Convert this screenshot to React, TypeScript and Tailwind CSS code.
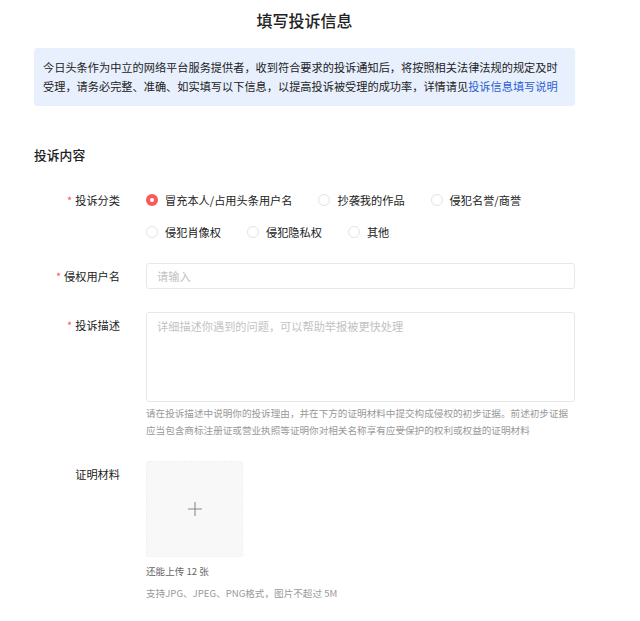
import React from "react";

const font = { fontFamily: '"Noto Sans CJK SC", "Noto Sans", sans-serif' };

function Radio({ label, checked }: { label: string; checked?: boolean }) {
  return (
    <label className="flex items-center mr-[26px] h-[20px]">
      {checked ? (
        <span className="w-[12px] h-[12px] rounded-full bg-[#f85959] flex items-center justify-center">
          <span className="w-[4px] h-[4px] rounded-full bg-white" />
        </span>
      ) : (
        <span className="w-[12px] h-[12px] rounded-full border border-[#e3e3e3] bg-white" />
      )}
      <span className="ml-[7px] text-[11.2px] text-[#222]">{label}</span>
    </label>
  );
}

function Label({ text, required, lh }: { text: string; required?: boolean; lh: string }) {
  return (
    <div className={`w-[86px] shrink-0 flex justify-end items-start text-[11.2px] text-[#222] ${lh}`}>
      {required && <span className="text-[#f85959] mr-[3px] text-[11px]">*</span>}
      <span>{text}</span>
    </div>
  );
}

export default function App() {
  return (
    <div className="w-[640px] min-h-[621px] bg-white" style={font}>
      <div className="ml-[34px] w-[541px] pt-[8px]">
        <h1 className="text-center text-[16px] leading-[24px] font-medium text-[#222]">填写投诉信息</h1>
        <div className="mt-[16px] bg-[#e8f0fe] rounded-[3px] px-[9px] py-[10px] text-[11.2px] leading-[19px] text-[#222]">
          今日头条作为中立的网络平台服务提供者，收到符合要求的投诉通知后，将按照相关法律法规的规定及时
          <br />
          受理，请务必完整、准确、如实填写以下信息，以提高投诉被受理的成功率，详情请见
          <span className="text-[#2f5fd3]">投诉信息填写说明</span>
        </div>
        <h2 className="mt-[39px] text-[12.8px] leading-[20px] font-medium text-[#222]">投诉内容</h2>

        <div className="mt-[25px] flex">
          <Label text="投诉分类" required lh="leading-[20px]" />
          <div className="ml-[26px] flex flex-col gap-[12px]">
            <div className="flex">
              <Radio label="冒充本人/占用头条用户名" checked />
              <Radio label="抄袭我的作品" />
              <Radio label="侵犯名誉/商誉" />
            </div>
            <div className="flex">
              <Radio label="侵犯肖像权" />
              <Radio label="侵犯隐私权" />
              <Radio label="其他" />
            </div>
          </div>
        </div>

        <div className="mt-[21px] flex">
          <Label text="侵权用户名" required lh="leading-[26px]" />
          <div className="ml-[26px] flex-1 h-[26px] border border-[#e8e8e8] rounded-[3px] px-[10px] flex items-center text-[11.2px] text-[#c2c2c2]">
            请输入
          </div>
        </div>

        <div className="mt-[23px] flex">
          <Label text="投诉描述" required lh="leading-[26px]" />
          <div className="ml-[26px] flex-1">
            <div className="h-[90px] border border-[#e8e8e8] rounded-[3px] px-[10px] pt-[5px] text-[11.2px] leading-[16px] text-[#c2c2c2]">
              详细描述你遇到的问题，可以帮助举报被更快处理
            </div>
            <div className="mt-[3px] text-[9.6px] leading-[17px] text-[#999]">
              请在投诉描述中说明你的投诉理由，并在下方的证明材料中提交构成侵权的初步证据。前述初步证据
              <br />
              应当包含商标注册证或营业执照等证明你对相关名称享有应受保护的权利或权益的证明材料
            </div>
          </div>
        </div>

        <div className="mt-[22px] flex">
          <Label text="证明材料" lh="leading-[26px]" />
          <div className="ml-[26px] flex-1">
            <div className="w-[97px] h-[96px] bg-[#f8f8f8] border border-dashed border-[#f0f0f0] rounded-[3px] flex items-center justify-center">
              <svg width="14" height="14" viewBox="0 0 14 14">
                <path d="M7 0v14M0 7h14" stroke="#8a8a8a" strokeWidth="1.1" />
              </svg>
            </div>
            <div className="mt-[6px] text-[9.6px] leading-[17px] text-[#666]">还能上传 12 张</div>
            <div className="mt-[5px] text-[9.6px] leading-[17px] text-[#999]">支持JPG、JPEG、PNG格式，图片不超过 5M</div>
          </div>
        </div>
      </div>
    </div>
  );
}
